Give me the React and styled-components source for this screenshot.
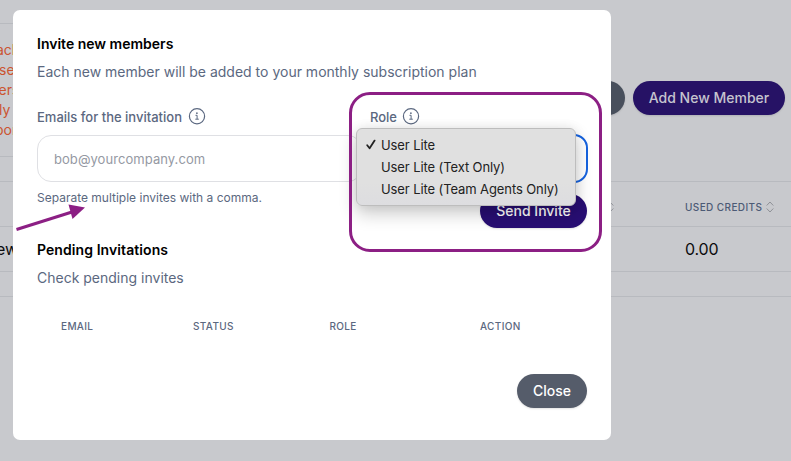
import React from "react";
import styled, { createGlobalStyle } from "styled-components";

const theme = {
  page: "#c8c9cd",
  line: "#b8babf",
  slate: "#5b6880",
  indigo: "#280e73",
  magenta: "#8c1f84"
};

const GlobalStyle = createGlobalStyle`
  * {
    box-sizing: border-box;
  }
  body {
    margin: 0;
    background: ${theme.page};
    font-family: Inter, "Liberation Sans", sans-serif;
    overflow: hidden;
  }
`;

const Page = styled.div`
  position: relative;
  width: 791px;
  height: 461px;
  overflow: hidden;
`;

const TopSection = styled.div`
  display: flex;
  justify-content: space-between;
  height: 181px;
  padding: 23px 6px 24px 0;
`;

const Alert = styled.div`
  width: 300px;
  padding: 16px 0;
  border-top: 1px solid ${theme.line};
  border-bottom: 1px solid ${theme.line};
  color: #cb5431;
  font-size: 14px;
  line-height: 20px;
`;

const AlertLine = styled.div`
  margin-left: ${props => props.$shift || 0}px;
`;

const Actions = styled.div`
  display: flex;
  gap: 8px;
  padding-top: 58px;
`;

const Button = styled.button`
  display: flex;
  align-items: center;
  justify-content: center;
  width: ${props => props.width}px;
  height: 34px;
  padding: 0 0 1px;
  border: 0;
  border-radius: 17px;
  background: ${props => props.color};
  color: ${props => (props.$dimmed ? "#c5c4cf" : "#fff")};
  font: 500 14px Inter, sans-serif;
  white-space: nowrap;
  box-shadow: 0 1px 2px rgba(0, 0, 0, 0.12);
`;

const MembersRow = styled.div`
  display: grid;
  grid-template-columns: 606px 79px 1fr;
  align-items: center;
  height: 45px;
  border-top: 1px solid ${theme.line};
  font-size: 16px;
  letter-spacing: -0.15px;
  color: #0c0c0e;
`;

const MembersFooter = styled.div`
  height: 26px;
  border-top: 1px solid ${theme.line};
  border-bottom: 1px solid ${theme.line};
`;

const ColumnName = styled.div`
  display: flex;
  align-items: center;
  gap: 4px;
  padding-top: 6px;
  font-size: 10px;
  font-weight: 500;
  letter-spacing: 0.4px;
  color: #4c5a75;
`;

const Clipped = styled.div`
  margin-left: -4px;
`;

const Modal = styled.div`
  position: absolute;
  top: 10px;
  left: 13px;
  width: 598px;
  height: 430px;
  padding: 24px;
  border-radius: 7px;
  background: #fff;
`;

const Title = styled.div`
  font-size: 14px;
  line-height: 20px;
  font-weight: 600;
  letter-spacing: ${props => props.$spacing || 0}px;
  color: #000;
`;

const Subtitle = styled.div`
  margin-top: 8px;
  font-size: 14px;
  line-height: 20px;
  color: ${theme.slate};
`;

const Form = styled.div`
  display: grid;
  grid-template-columns: 325px 218px;
  column-gap: 8px;
  margin-top: 24px;
`;

const Label = styled.div`
  display: flex;
  align-items: center;
  gap: ${props => props.$gap}px;
  height: 22px;
  font-size: 13px;
  font-weight: 500;
  color: ${theme.slate};
`;

const EmailInput = styled.input`
  display: block;
  width: 100%;
  height: 47px;
  margin-top: 7px;
  padding: 0 16px;
  border: 1px solid #dfe0e4;
  border-radius: 14px;
  outline: 0;
  font: 400 13px Inter, sans-serif;
  letter-spacing: 0.06px;
  &::placeholder {
    color: #9599a3;
    opacity: 1;
  }
`;

const RoleSelect = styled.div`
  height: 49px;
  margin-top: 6px;
  border: 2px solid #1663df;
  border-radius: 14px;
`;

const FormFooter = styled.div`
  display: flex;
  justify-content: space-between;
  height: 57px;
  padding-top: 6px;
`;

const Hint = styled.div`
  font-size: 12px;
  line-height: 18px;
  color: ${theme.slate};
`;

const SendWrap = styled.div`
  padding-top: 5px;
`;

const InvitesHead = styled.div`
  display: grid;
  grid-template-columns: 132px 136.5px 150.5px 1fr;
  margin-top: 30px;
  padding: 0 24px;
  font-size: 10px;
  line-height: 16px;
  font-weight: 500;
  letter-spacing: 0.35px;
  color: ${theme.slate};
`;

const ModalFooter = styled.div`
  display: flex;
  justify-content: flex-end;
  margin-top: 40px;
`;

const Callout = styled.div`
  position: absolute;
  top: 92px;
  left: 349px;
  width: 253px;
  height: 160px;
  border: 3px solid ${theme.magenta};
  border-radius: 21px;
`;

const Arrow = styled.svg`
  position: absolute;
  top: 200px;
  left: 14px;
`;

const Menu = styled.div`
  position: absolute;
  top: 128px;
  left: 356px;
  width: 220px;
  height: 78px;
  padding: 5px 0;
  border: 1px solid #bdbdbd;
  border-radius: 6px;
  background: linear-gradient(#e0e0e0 70%, #dddde0);
  box-shadow: 0 8px 18px rgba(0, 0, 0, 0.2), 0 0 12px rgba(0, 0, 0, 0.08);
`;

const MenuItem = styled.div`
  display: grid;
  grid-template-columns: 16px 1fr;
  align-items: center;
  height: 22px;
  padding-left: 8px;
  font-size: 13px;
  letter-spacing: -0.1px;
  color: #222;
  white-space: nowrap;
`;

const InfoIcon = () => (
  <svg width="18" height="18" viewBox="0 0 18 18" fill="none" stroke={theme.slate}>
    <circle cx="9" cy="8.2" r="7.6" strokeWidth="1.2" />
    <path d="M7.5 7.3h1.6v3.8M7.3 11.2h3.5" strokeWidth="1" />
    <circle cx="8.9" cy="5.2" r="0.85" fill={theme.slate} stroke="none" />
  </svg>
);

const SortIcon = () => (
  <svg width="8" height="12" viewBox="0 0 8 12" fill="none" stroke="#8f9197">
    <path d="M0.7 4.5L4 1l3.3 3.5M0.7 7.5L4 11l3.3-3.5" />
  </svg>
);

const CheckIcon = () => (
  <svg width="12" height="12" viewBox="0 0 12 12" fill="none" stroke="#222">
    <path d="M2.2 7.2L4.6 10.2L9.6 2.6" strokeWidth="1.8" strokeLinecap="round" strokeLinejoin="round" />
  </svg>
);

const ALERT_LINES = [
  { text: "ach", shift: -4 },
  { text: "sea", shift: -1 },
  { text: "ers", shift: -1.5 },
  { text: "ly", shift: -1 },
  { text: "por", shift: -5 }
];

const ROLES = ["User Lite", "User Lite (Text Only)", "User Lite (Team Agents Only)"];

const MembersScreen = () => (
  <>
    <TopSection>
      <Alert>
        {ALERT_LINES.map(line => (
          <AlertLine key={line.text} $shift={line.shift}>
            {line.text}
          </AlertLine>
        ))}
      </Alert>
      <Actions>
        <Button width={70} color="#484f5c" $dimmed />
        <Button width={152} color="#261265" $dimmed>
          Add New Member
        </Button>
      </Actions>
    </TopSection>
    <MembersRow>
      <div />
      <ColumnName>
        <SortIcon />
      </ColumnName>
      <ColumnName>
        USED CREDITS <SortIcon />
      </ColumnName>
    </MembersRow>
    <MembersRow>
      <Clipped>ew</Clipped>
      <div />
      <div>0.00</div>
    </MembersRow>
    <MembersFooter />
  </>
);

const InviteModal = () => (
  <Modal>
    <Title>Invite new members</Title>
    <Subtitle>Each new member will be added to your monthly subscription plan</Subtitle>
    <Form>
      <div>
        <Label $gap={6}>
          Emails for the invitation <InfoIcon />
        </Label>
        <EmailInput placeholder="bob@yourcompany.com" />
      </div>
      <div>
        <Label $gap={5}>
          Role <InfoIcon />
        </Label>
        <RoleSelect />
      </div>
    </Form>
    <FormFooter>
      <Hint>Separate multiple invites with a comma.</Hint>
      <SendWrap>
        <Button width={107} color={theme.indigo}>
          Send Invite
        </Button>
      </SendWrap>
    </FormFooter>
    <Title $spacing={0.08}>Pending Invitations</Title>
    <Subtitle>Check pending invites</Subtitle>
    <InvitesHead>
      <div>EMAIL</div>
      <div>STATUS</div>
      <div>ROLE</div>
      <div>ACTION</div>
    </InvitesHead>
    <ModalFooter>
      <Button width={70} color="#555c6a">
        Close
      </Button>
    </ModalFooter>
  </Modal>
);

const RoleMenu = () => (
  <Menu>
    {ROLES.map((role, i) => (
      <MenuItem key={role}>
        <span>{i === 0 && <CheckIcon />}</span>
        {role}
      </MenuItem>
    ))}
  </Menu>
);

const App = () => (
  <Page>
    <GlobalStyle />
    <MembersScreen />
    <InviteModal />
    <RoleMenu />
    <Callout />
    <Arrow width="74" height="34" viewBox="0 0 74 34">
      <path d="M2.5 29.5L58 12" stroke={theme.magenta} strokeWidth="3" />
      <path d="M54.5 4.5L71 7.5L58.5 19z" fill={theme.magenta} />
    </Arrow>
  </Page>
);

export default App;
